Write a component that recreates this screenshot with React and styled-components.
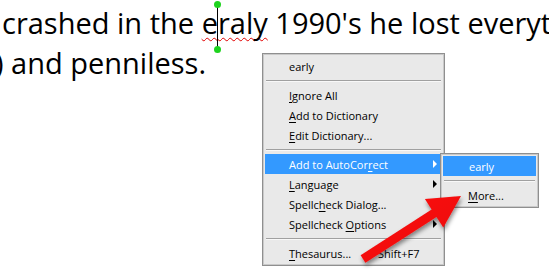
import React from "react";
import styled, { createGlobalStyle } from "styled-components";

const Global = createGlobalStyle`
  html, body { margin: 0; padding: 0; background: #fff; }
  body { overflow: hidden; }
`;

const Page = styled.div`
  position: relative;
  width: 549px;
  height: 274px;
  overflow: hidden;
  background: #fff;
`;

const Doc = styled.div`
  padding-top: 3px;
  font-family: "Open Sans", "Lato", sans-serif;
  font-size: 29px;
  line-height: 40px;
  color: #000;
  white-space: nowrap;
`;

const Line = styled.div`
  margin-left: ${(p) => p.$indent || 0}px;
`;

const Misspelled = styled.span`
  text-decoration: underline wavy #e00000;
  text-decoration-thickness: 1px;
  text-underline-offset: 3px;
  text-decoration-skip-ink: none;
`;

const Caret = styled.span`
  position: relative;
  display: inline-block;
  width: 0;
  height: 0;
`;

const CaretLine = styled.span`
  position: absolute;
  left: -1px;
  top: -30px;
  width: 1px;
  height: 45px;
  background: #000;
`;

const Handle = styled.span`
  position: absolute;
  left: -4px;
  top: ${(p) => p.$top}px;
  width: 7px;
  height: 7px;
  border-radius: 50%;
  background: #1ed31e;
`;

const Menu = styled.div`
  position: absolute;
  left: ${(p) => p.$left}px;
  top: ${(p) => p.$top}px;
  width: ${(p) => p.$width}px;
  box-sizing: border-box;
  background: #e9e9e9;
  border: 1px solid #8f8f8f;
  box-shadow: inset 0 0 0 1px #c9c9c9;
  padding: 2px 2px;
  display: flex;
  flex-direction: column;
  font-family: "Open Sans", "Segoe UI", sans-serif;
  font-size: 11px;
  color: #000;
`;

const Item = styled.div`
  display: flex;
  align-items: center;
  height: 20px;
  padding-left: ${(p) => p.$pad || 24}px;
  padding-right: 5px;
  background: ${(p) => (p.$active ? "#3399ff" : "transparent")};
  color: ${(p) => (p.$active ? "#fff" : "#000")};
  white-space: nowrap;
`;

const Label = styled.span`
  flex: ${(p) => (p.$fixed ? `0 0 ${p.$fixed}px` : "1 1 auto")};
`;

const Shortcut = styled.span`
  flex: 1 1 auto;
`;

const Key = styled.span`
  text-decoration: underline;
  text-underline-offset: 2px;
`;

const SubArrow = styled.span`
  width: 0;
  height: 0;
  border-top: 4px solid transparent;
  border-bottom: 4px solid transparent;
  border-left: 4px solid ${(p) => (p.$active ? "#fff" : "#000")};
`;

const Separator = styled.div`
  height: 9px;
  display: flex;
  align-items: center;
  padding: 0 1px;
  &::after {
    content: "";
    flex: 1;
    height: 1px;
    background: #a0a0a0;
    border-bottom: 1px solid #f8f8f8;
  }
`;

const Overlay = styled.svg`
  position: absolute;
  left: 0;
  top: 0;
  pointer-events: none;
`;

function RedArrow() {
  const tip = [461, 196];
  const tail = [363, 259];
  const dx = tip[0] - tail[0];
  const dy = tip[1] - tail[1];
  const len = Math.hypot(dx, dy);
  const ux = dx / len, uy = dy / len;
  const px = -uy, py = ux;
  const headLen = 32, headHalf = 17, shaftHalf = 4.5;
  const bx = tip[0] - ux * headLen, by = tip[1] - uy * headLen;
  const pts = [
    [tail[0] + px * shaftHalf, tail[1] + py * shaftHalf],
    [bx + px * shaftHalf, by + py * shaftHalf],
    [bx + px * headHalf, by + py * headHalf],
    tip,
    [bx - px * headHalf, by - py * headHalf],
    [bx - px * shaftHalf, by - py * shaftHalf],
    [tail[0] - px * shaftHalf, tail[1] - py * shaftHalf],
  ]
    .map((p) => p.map((v) => v.toFixed(1)).join(","))
    .join(" ");
  return (
    <Overlay width="549" height="274" viewBox="0 0 549 274">
      <defs>
        <filter id="sh" x="-20%" y="-20%" width="140%" height="140%">
          <feDropShadow dx="1" dy="3" stdDeviation="2" floodColor="#000" floodOpacity="0.45" />
        </filter>
        <linearGradient id="rg" x1="0" y1="0" x2="1" y2="1">
          <stop offset="0" stopColor="#ff1a1a" />
          <stop offset="1" stopColor="#e80000" />
        </linearGradient>
      </defs>
      <polygon points={pts} fill="url(#rg)" filter="url(#sh)" />
    </Overlay>
  );
}

export default function App() {
  return (
    <Page>
      <Global />
      <Doc>
        <Line $indent={2}>
          crashed in the{" "}
          <Misspelled>
            e
            <Caret>
              <CaretLine />
              <Handle $top={-33} />
              <Handle $top={12} />
            </Caret>
            raly
          </Misspelled>{" "}
          1990's he lost everything
        </Line>
        <Line $indent={-5}>) and penniless.</Line>
      </Doc>

      <Menu $left={262} $top={53} $width={183}>
        <Item>early</Item>
        <Separator />
        <Item><Key>I</Key>gnore All</Item>
        <Item><Key>A</Key>dd to Dictionary</Item>
        <Item><Key>E</Key>dit Dictionary...</Item>
        <Separator />
        <Item $active>
          <Label>Add to AutoCor<Key>r</Key>ect</Label>
          <SubArrow $active />
        </Item>
        <Item>
          <Label><Key>L</Key>anguage</Label>
          <SubArrow />
        </Item>
        <Item>Spellc<Key>h</Key>eck Dialog...</Item>
        <Item>
          <Label>Spellcheck <Key>O</Key>ptions</Label>
          <SubArrow />
        </Item>
        <Separator />
        <Item>
          <Label $fixed={89}><Key>T</Key>hesaurus...</Label>
          <Shortcut>Shift+F7</Shortcut>
        </Item>
      </Menu>

      <Menu $left={440} $top={153} $width={99}>
        <Item $active $pad={26}>early</Item>
        <Separator />
        <Item $pad={25}><Key>M</Key>ore...</Item>
      </Menu>

      <RedArrow />
    </Page>
  );
}
